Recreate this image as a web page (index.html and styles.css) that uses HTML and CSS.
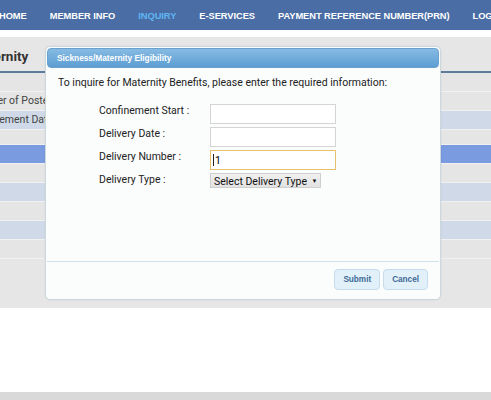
FILE: index.html
```html
<!DOCTYPE html>
<html>
  <head>
    <meta charset="UTF-8">
    <title>Sickness/Maternity Eligibility</title>
    <link rel="stylesheet" href="styles.css">
  </head>
  <body>

    <nav class="topnav">
      <a href="#">HOME</a>
      <a href="#">MEMBER INFO</a>
      <a href="#" class="active">INQUIRY</a>
      <a href="#">E-SERVICES</a>
      <a href="#">PAYMENT REFERENCE NUMBER(PRN)</a>
      <a href="#">LOGOUT</a>
    </nav>

    <div class="content">
      <h2 class="page-title">Maternity</h2>
      <div class="info-table">
        <div class="row"></div>
        <div class="row"><span class="cell">Number of Posted Contributions</span></div>
        <div class="row alt"><span class="cell">Confinement Date</span></div>
        <div class="row short"></div>
        <div class="row selected"></div>
        <div class="row"></div>
        <div class="row alt"></div>
        <div class="row"></div>
        <div class="row alt"></div>
        <div class="row"></div>
      </div>
    </div>

    <div class="blank"></div>
    <div class="footer"></div>

    <div class="dialog">
      <div class="dialog-title">Sickness/Maternity Eligibility</div>
      <div class="dialog-body">
        <p class="intro">To inquire for Maternity Benefits, please enter the required information:</p>
        <form name="eligibility" class="fields">
          <label for="conf_start">Confinement Start :</label>
          <input type="text" id="conf_start" name="conf_start">

          <label for="deliv_date">Delivery Date :</label>
          <input type="text" id="deliv_date" name="deliv_date">

          <label for="deliv_no">Delivery Number :</label>
          <div class="input-wrap">
            <input type="text" id="deliv_no" name="deliv_no" class="focused" value="1">
            <span class="caret"></span>
          </div>

          <label for="deliv_type">Delivery Type :</label>
          <div class="select-box" id="deliv_type">Select Delivery Type <span class="arrow">&#9660;</span></div>
        </form>
      </div>
      <div class="dialog-buttons">
        <button type="button">Submit</button>
        <button type="button">Cancel</button>
      </div>
    </div>

  </body>
</html>
```

FILE: styles.css
```css
:root {
  --nav-color: #4a6da5;
  --row-gray: #e5e5e5;
  --row-alt: #cfd9e7;
  --row-selected: #7b9be0;
  --btn-text: #3d6a94;
}

body {
  margin: 0;
  font-family: Roboto, "Liberation Sans", Arial, sans-serif;
  background-color: #fff;
  overflow: hidden;
  width: 491px;
  height: 400px;
}

/* barra de navegação */
.topnav {
  display: flex;
  gap: 23px;
  height: 30px;
  align-items: center;
  background-color: var(--nav-color);
  white-space: nowrap;
  overflow: hidden;
  margin-left: -1px;
  padding-top: 1px;
  box-sizing: border-box;
}

.topnav a {
  font-family: "Liberation Sans", Arial, sans-serif;
  font-size: 9.3px;
  font-weight: bold;
  color: #fff;
  text-decoration: none;
  letter-spacing: -0.05px;
}

.topnav a.active {
  color: #5fb6f2;
}

.content {
  margin-top: 7px;
  height: 271px;
  background-color: #e6e6e6;
  overflow: hidden;
}

.page-title {
  margin: 0 0 0 -30px;
  height: 34px;
  line-height: 38px;
  font-size: 13.5px;
  font-weight: bold;
  color: #333;
  border-bottom: 2px solid #5d7d9d;
}

.info-table .row {
  height: 18px;
  border-bottom: 1px solid #f1f1f1;
  background-color: var(--row-gray);
  white-space: nowrap;
  overflow: hidden;
}

.info-table .row.short {
  height: 14px;
}

.info-table .row.alt {
  background-color: var(--row-alt);
}

.info-table .row.selected {
  background-color: var(--row-selected);
}

.info-table .cell {
  display: block;
  margin-left: -31px;
  line-height: 18px;
  font-size: 10.5px;
  color: #444;
}

.blank {
  height: 84px;
}

.footer {
  height: 8px;
  background-color: #d9d9d9;
}

/* janela de diálogo */
.dialog {
  position: absolute;
  left: 45px;
  top: 46px;
  width: 396px;
  height: 254px;
  box-sizing: border-box;
  border: 1px solid #cbd9df;
  border-radius: 5px;
  background-color: #fbfdfd;
  padding: 1px;
  display: flex;
  flex-direction: column;
  box-shadow: 0 0 2px rgba(0, 0, 0, 0.08);
}

.dialog-title {
  height: 20px;
  box-sizing: border-box;
  border: 1px solid #6aa1cf;
  border-radius: 4px;
  background: linear-gradient(#86bbe3, #5d9dd2);
  color: #fff;
  font-family: "Liberation Sans", Arial, sans-serif;
  font-size: 8.3px;
  font-weight: bold;
  line-height: 18px;
  padding-left: 9px;
}

.dialog-body {
  flex: 1;
  padding: 8px 0 0 11px;
}

.intro {
  margin: 0;
  font-size: 10.5px;
  line-height: 14px;
  color: #222;
}

.fields {
  display: grid;
  grid-template-columns: 111px auto;
  row-gap: 3px;
  margin: 14px 0 0 41px;
  align-items: start;
}

.fields label {
  font-size: 10.5px;
  line-height: 13px;
  color: #222;
}

.fields input[type="text"] {
  display: block;
  width: 126px;
  height: 20px;
  box-sizing: border-box;
  border: 1px solid #d4d4d4;
  background-color: #fff;
  padding: 0 3px 0 4px;
  font-family: Roboto, sans-serif;
  font-size: 10.5px;
  margin: 0;
}

.fields input.focused {
  border: 1px solid #e6c26c;
  outline: none;
}

.input-wrap {
  position: relative;
  width: 126px;
}

.caret {
  position: absolute;
  left: 3px;
  top: 4px;
  width: 1px;
  height: 12px;
  background-color: #222;
}

.select-box {
  width: 111px;
  height: 15px;
  box-sizing: border-box;
  border: 1px solid #cfcfcf;
  background: linear-gradient(#f0f0f0, #e2e2e2);
  font-size: 10.5px;
  line-height: 13px;
  padding-left: 3px;
  color: #111;
  white-space: nowrap;
}

.select-box .arrow {
  font-size: 6px;
  vertical-align: 2px;
  margin-left: 2px;
}

.dialog-buttons {
  border-top: 1px solid #cfe0e8;
  height: 37px;
  box-sizing: border-box;
  display: flex;
  justify-content: flex-end;
  align-items: flex-start;
  gap: 3px;
  padding: 7px 11px 0 0;
}

.dialog-buttons button {
  height: 21px;
  padding: 0 8px;
  border: 1px solid #c6dcec;
  border-radius: 4px;
  background-color: #e2f0fa;
  color: var(--btn-text);
  font-family: "Liberation Sans", Arial, sans-serif;
  font-size: 8.2px;
  font-weight: bold;
  cursor: pointer;
}

.dialog-buttons button:hover {
  background-color: #d3e8f7;
}
```
